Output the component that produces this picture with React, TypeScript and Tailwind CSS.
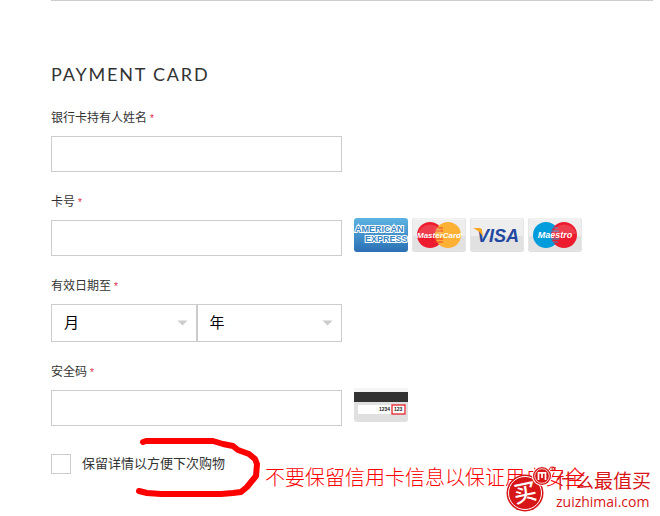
import type { ReactNode } from 'react';

interface FieldProps {
    id: string;
    label: string;
    children: ReactNode;
}

interface DateSelectProps {
    id: string;
    label: string;
    placeholder: string;
    options: string[];
}

const MONTHS = ['01', '02', '03', '04', '05', '06', '07', '08', '09', '10', '11', '12'];
const YEARS = ['2015', '2016', '2017', '2018', '2019', '2020'];

const inputClass = 'block h-9 w-full max-w-[291px] min-w-0 border border-[#ccc] bg-white px-3 text-sm text-black outline-none';

function Field({ id, label, children }: FieldProps) {
    return (
        <div>
            <label htmlFor={id} className="mb-2 block pt-px text-xs leading-5 text-[#333]">
                {label}
                <span className="ml-[3px] text-[10px] leading-none text-[#d8284b]">*</span>
            </label>
            {children}
        </div>
    );
}

function DateSelect({ id, label, placeholder, options }: DateSelectProps) {
    return (
        <div className="relative flex-1">
            <select
                id={id}
                aria-label={label}
                defaultValue=""
                className="block h-[38px] w-full appearance-none border border-[#ccc] bg-white px-3 text-[15px] text-black outline-none"
            >
                <option value="">{placeholder}</option>
                {options.map((option) => (
                    <option key={option} value={option}>{option}</option>
                ))}
            </select>
            <svg className="pointer-events-none absolute top-4 right-[9px]" width="11" height="6" viewBox="0 0 11 6">
                <path d="M0.5 0.5h10l-5 5z" fill="#ccc" />
            </svg>
        </div>
    );
}

/* Grey card used behind most of the brands */
function CardBase() {
    return (
        <>
            <rect width="54" height="34" rx="3" fill="#dedede" />
            <rect x="0.5" y="0.5" width="53" height="32" rx="2.5" fill="#eeeeee" />
            <path d="M1 18h52v14H1z" fill="#e1e1e1" />
            <path d="M2 1h50" stroke="#f8f8f8" />
        </>
    );
}

function AmexCard() {
    return (
        <svg width="54" height="34" viewBox="0 0 54 34" role="img" aria-label="American Express">
            <defs>
                <linearGradient id="amex" x1="0" y1="0" x2="0" y2="1">
                    <stop offset="0" stopColor="#5cb3e2" />
                    <stop offset="1" stopColor="#2b70b4" />
                </linearGradient>
            </defs>
            <rect width="54" height="34" rx="3" fill="url(#amex)" />
            <g fontFamily="Liberation Sans, sans-serif" fontWeight="700" fontSize="9" fill="#3585c3" stroke="#fff" strokeWidth="2" paintOrder="stroke">
                <text x="1" y="14">AMERICAN</text>
                <text x="11" y="24">EXPRESS</text>
            </g>
        </svg>
    );
}

function MasterCard() {
    return (
        <svg width="54" height="34" viewBox="0 0 54 34" role="img" aria-label="MasterCard">
            <CardBase />
            <circle cx="18" cy="17" r="13" fill="#ec1c2e" />
            <circle cx="36" cy="17" r="13" fill="#fcb034" />
            <path d="M22 10h9M22 13h9M22 21h9M22 24h9" stroke="#ec3c2e" />
            <path d="M5.5 16a13 13 0 0 1 25 0z" fill="#fff" opacity="0.15" />
            <text x="27" y="20" textAnchor="middle" fontFamily="Liberation Sans, sans-serif" fontSize="8" fontWeight="700" fontStyle="italic" fill="#fff">MasterCard</text>
        </svg>
    );
}

function VisaCard() {
    return (
        <svg width="54" height="34" viewBox="0 0 54 34" role="img" aria-label="Visa">
            <CardBase />
            <text x="28" y="24" textAnchor="middle" fontFamily="Liberation Sans, sans-serif" fontSize="18" fontWeight="700" fontStyle="italic" fill="#2348a0">VISA</text>
            <path d="M3 10h6q3 0 3 3l1 6q-3-6-10-9z" fill="#f9a61e" />
        </svg>
    );
}

function MaestroCard() {
    return (
        <svg width="54" height="34" viewBox="0 0 54 34" role="img" aria-label="Maestro">
            <CardBase />
            <circle cx="18" cy="17" r="13" fill="#019cdc" />
            <circle cx="36" cy="17" r="13" fill="#ec1c2e" />
            <path d="M23 10h7M22 13h9M22 21h9M23 24h7" stroke="#2b91cb" />
            <path d="M23.5 16a13 13 0 0 1 25 0z" fill="#fff" opacity="0.15" />
            <text x="27" y="20" textAnchor="middle" fontFamily="Liberation Sans, sans-serif" fontSize="9" fontWeight="700" fontStyle="italic" fill="#fff">Maestro</text>
        </svg>
    );
}

function SecurityCard() {
    return (
        <svg width="54" height="34" viewBox="0 0 54 34" role="img" aria-label="安全码位置">
            <rect width="54" height="34" rx="3" fill="#e0e0e0" />
            <rect width="54" height="6" rx="2" fill="#f5f5f5" />
            <path d="M0 4h54v10H0z" fill="#333" />
            <path d="M4 17h48v9H4z" fill="#fff" />
            <g fontFamily="Liberation Sans, sans-serif" fontSize="5" fontWeight="700" fill="#222">
                <text x="25" y="23">1234</text>
                <text x="40" y="23">123</text>
            </g>
            <rect x="38" y="17" width="13" height="9" fill="none" stroke="#e6222f" strokeWidth="1.3" />
        </svg>
    );
}

function Watermark() {
    return (
        <div className="absolute top-[11px] left-[453px] flex items-center text-[#d71618]">
            <svg width="52" height="50" viewBox="0 0 52 50" aria-hidden="true">
                <circle cx="21" cy="28" r="18.5" fill="#d71618" />
                <circle cx="21" cy="28" r="16.5" fill="none" stroke="#fff" />
                <text x="21" y="36" textAnchor="middle" transform="rotate(-12 21 28)" fontFamily="Noto Sans CJK SC, sans-serif" fontSize="23" fontWeight="500" fill="#fff">买</text>
                <circle cx="38" cy="11" r="10" fill="#fff" />
                <circle cx="38" cy="11" r="9" fill="#d71618" />
                <circle cx="38" cy="11" r="7.3" fill="none" stroke="#fff" strokeWidth="0.8" />
                <path d="M34.5 15V7.8h7V15M38 8v5" fill="none" stroke="#fff" strokeWidth="1.7" />
                <path d="M45 5q1-4 4-3t1 3-2-1 4-1" fill="none" stroke="#d71618" />
            </svg>
            <div>
                <p className="text-[19px] leading-6">什么最值买</p>
                <p className="font-['Open_Sans',sans-serif] text-sm leading-4 font-medium">zuizhimai.com</p>
            </div>
        </div>
    );
}

export default function App() {
    return (
        <main className="bg-white pr-[7px] pb-10 pl-[51px] font-['Liberation_Sans','Noto_Sans_CJK_SC',sans-serif]">
            <form className="border-t border-[#ccc] pt-[61px]">
                <h2 className="mb-[21px] font-['Lato',sans-serif] text-lg leading-6 tracking-widest text-[#333]">PAYMENT CARD</h2>

                <div className="flex flex-col gap-[19px]">
                    <Field id="holder" label="银行卡持有人姓名">
                        <input id="holder" type="text" className={inputClass} />
                    </Field>

                    <Field id="number" label="卡号">
                        <div className="flex items-center gap-3">
                            <input id="number" type="text" className={inputClass} />
                            <div className="-my-0.5 flex shrink-0 gap-1 pb-1.5">
                                <AmexCard />
                                <MasterCard />
                                <VisaCard />
                                <MaestroCard />
                            </div>
                        </div>
                    </Field>

                    <Field id="month" label="有效日期至">
                        <div className="flex max-w-[291px]">
                            <DateSelect id="month" label="月" placeholder="月" options={MONTHS} />
                            <DateSelect id="year" label="年" placeholder="年" options={YEARS} />
                        </div>
                    </Field>

                    <Field id="code" label="安全码">
                        <div className="flex items-center gap-3">
                            <input id="code" type="text" className={inputClass} />
                            <div className="-my-0.5 shrink-0 pb-1.5">
                                <SecurityCard />
                            </div>
                        </div>
                    </Field>
                </div>

                <div className="relative mt-7">
                    <label htmlFor="save" className="inline-flex items-center gap-[11px] text-[13px] leading-5 text-[#333]">
                        <input id="save" type="checkbox" className="size-5 appearance-none border border-[#ccc] bg-white" />
                        保留详情以方便下次购物
                    </label>

                    {/* Hand-drawn note */}
                    <svg className="pointer-events-none absolute -top-5 left-20" width="132" height="64" viewBox="0 0 132 64" aria-hidden="true">
                        <path
                            d="M12 8l3-1h67l10 3 10 2 5 4 11 4 6 5 2 5-1 12-9 11-6 5-8 1-12 1H30l-14-1-8-2"
                            fill="none"
                            stroke="#fe0000"
                            strokeWidth="6"
                            strokeLinecap="round"
                            strokeLinejoin="round"
                        />
                    </svg>
                    <p className="absolute top-2 left-[214px] text-[20px] leading-8 font-light whitespace-nowrap text-[#fe0000]">
                        不要保留信用卡信息以保证用户安全
                    </p>
                    <Watermark />
                </div>
            </form>
        </main>
    );
}
